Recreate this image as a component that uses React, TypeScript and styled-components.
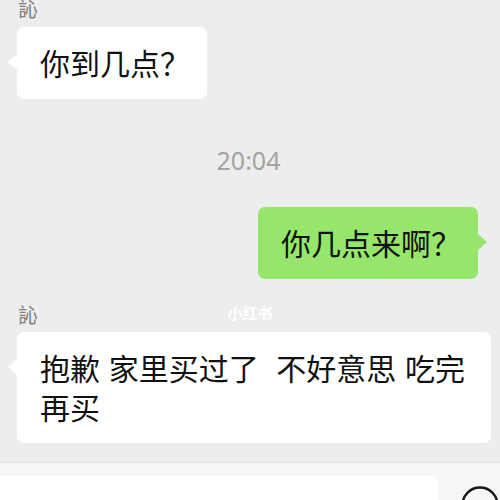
import React from 'react'
import styled, { createGlobalStyle } from 'styled-components';

const GlobalStyle = createGlobalStyle`
    html, body {
        margin: 0;
        padding: 0;
        background: #ededed;
        overflow: hidden;
    }
    * {
        box-sizing: border-box;
    }
`;

const Page = styled.div`
    position: relative;
    width: 500px;
    height: 500px;
    display: flex;
    flex-direction: column;
    overflow: hidden;
    font-family: "Noto Sans CJK SC", "Noto Sans", sans-serif;
`;

const ChatArea = styled.div`
    height: 466px;
    flex-shrink: 0;
    display: flex;
    flex-direction: column;
    padding: 0 0 0 17px;
    margin-top: -4px;
`;

const SenderName = styled.div<{ $gap: number }>`
    margin-top: ${(p) => p.$gap}px;
    padding-left: 1px;
    font-size: 20px;
    line-height: 26px;
    color: #7f7f7f;
`;

const Row = styled.div<{ $mine?: boolean; $gap: number }>`
    display: flex;
    justify-content: ${(p) => (p.$mine ? 'flex-end' : 'flex-start')};
    padding-right: ${(p) => (p.$mine ? '22px' : '0')};
    margin-top: ${(p) => p.$gap}px;
`;

const Bubble = styled.div<{ $mine?: boolean }>`
    position: relative;
    max-width: 474px;
    padding: 16px 17px 17px 23px;
    border-radius: 7px;
    background: ${(p) => (p.$mine ? '#95e66b' : '#ffffff')};
    color: #111111;
    font-size: 30px;
    line-height: 39px;
    word-spacing: 2px;
    white-space: pre-wrap;
    &::before {
        content: '';
        position: absolute;
        top: 27px;
        ${(p) => (p.$mine ? 'right: -9px;' : 'left: -9px;')}
        border-top: 8px solid transparent;
        border-bottom: 8px solid transparent;
        ${(p) =>
            p.$mine
                ? 'border-left: 9px solid #95e66b;'
                : 'border-right: 9px solid #ffffff;'}
    }
`;

const TimeStamp = styled.div<{ $gap: number }>`
    margin-top: ${(p) => p.$gap}px;
    margin-left: -20px;
    text-align: center;
    font-family: "Noto Sans", "Liberation Sans", sans-serif;
    font-size: 25px;
    line-height: 30px;
    color: #a3a3a3;
`;

const Watermark = styled.div`
    position: absolute;
    top: 303px;
    left: 0;
    right: 0;
    text-align: center;
    font-size: 15px;
    font-weight: bold;
    line-height: 20px;
    color: #ffffff;
    pointer-events: none;
`;

const InputBar = styled.div`
    flex: 1;
    display: flex;
    align-items: flex-start;
    background: #f6f6f6;
    border-top: 1px solid #e2e2e2;
    padding-top: 13px;
`;

const TextField = styled.div`
    width: 438px;
    height: 40px;
    background: #ffffff;
    border-radius: 0 6px 0 0;
`;

const IconButton = styled.div`
    margin-left: 23px;
    margin-top: 10px;
    width: 38px;
    height: 38px;
    svg {
        display: block;
    }
`;

type Message =
    | { kind: 'name'; text: string; gap: number }
    | { kind: 'time'; text: string; gap: number }
    | { kind: 'msg'; text: string; gap: number; mine?: boolean };

const messages: Message[] = [
    { kind: 'name', text: '訫', gap: 0 },
    { kind: 'msg', text: '你到几点？', gap: 5 },
    { kind: 'time', text: '20:04', gap: 46 },
    { kind: 'msg', text: '你几点来啊？', gap: 32, mine: true },
    { kind: 'name', text: '訫', gap: 23 },
    { kind: 'msg', text: '抱歉 家里买过了  不好意思 吃完再买', gap: 4 },
];

const App: React.FC = () => {
    return (
        <Page>
            <GlobalStyle />
            <ChatArea>
                {messages.map((m, i) => {
                    if (m.kind === 'name') return <SenderName key={i} $gap={m.gap}>{m.text}</SenderName>;
                    if (m.kind === 'time') return <TimeStamp key={i} $gap={m.gap}>{m.text}</TimeStamp>;
                    return (
                        <Row key={i} $mine={m.mine} $gap={m.gap}>
                            <Bubble $mine={m.mine}>{m.text}</Bubble>
                        </Row>
                    );
                })}
            </ChatArea>
            <InputBar>
                <TextField />
                <IconButton>
                    <svg width="38" height="38" viewBox="0 0 38 38">
                        <circle cx="19" cy="19" r="17.5" fill="none" stroke="#181818" strokeWidth="2.4" />
                    </svg>
                </IconButton>
            </InputBar>
            <Watermark>小红书</Watermark>
        </Page>
    )
}

export default App;
